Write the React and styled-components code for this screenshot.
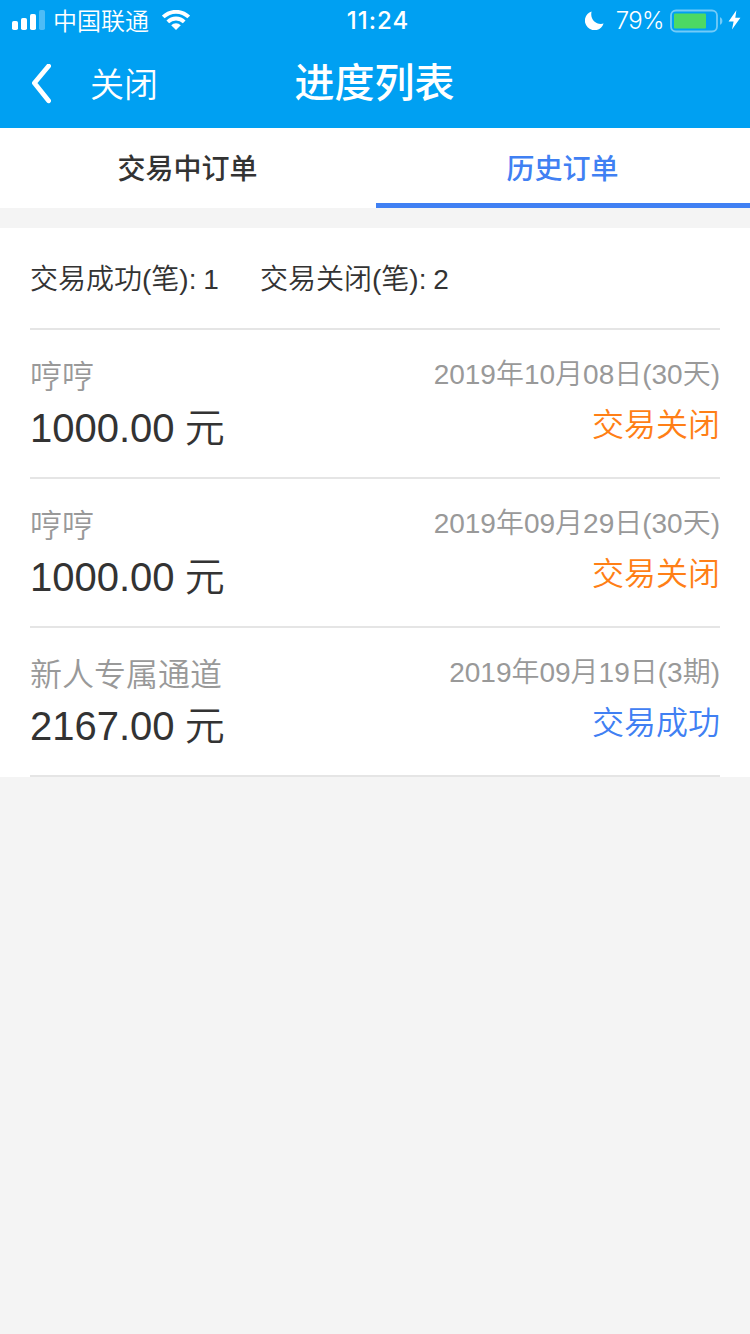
import React from 'react';
import styled, { createGlobalStyle, ThemeProvider } from 'styled-components';

const theme = {
  color: {
    header: '#00a0f2',
    primary: '#4080f3',
    warning: '#ff7f16',
    text: '#333333',
    muted: '#999999',
    line: '#e5e5e5',
    page: '#f4f4f4',
    battery: '#4cd964',
  },
  fontSize: {
    s: '28px',
    m: '32px',
    l: '40px',
  },
};

const GlobalStyle = createGlobalStyle`
  *,
  *::before,
  *::after {
    box-sizing: border-box;
  }

  body {
    margin: 0;
    font-family: 'Liberation Sans', 'Noto Sans CJK SC', sans-serif;
    color: ${theme.color.text};
    background: ${theme.color.page};
  }
`;

const StyledPage = styled.div`
  min-height: 100vh;
  background: ${({ theme }) => theme.color.page};
`;

const StyledHeader = styled.header`
  height: 128px;
  color: #fff;
  background: ${({ theme }) => theme.color.header};
`;

const StyledStatusBar = styled.div`
  display: grid;
  grid-template-columns: 1fr auto 1fr;
  align-items: center;
  height: 40px;
  padding: 0 9px 0 12px;
  font-family: Inter, 'Noto Sans CJK SC', sans-serif;
  font-size: 24px;
  line-height: 38px;
`;

const StyledStatusGroup = styled.div`
  display: flex;
  align-items: center;
  height: 40px;
  justify-content: ${({ align }) => align || 'flex-start'};
`;

const StyledCarrier = styled.span`
  margin: -1px 13px 0 8px;
  font-family: 'Noto Sans CJK SC', sans-serif;
  font-weight: 350;
`;

const StyledTime = styled.span`
  padding: 2px 0 0 3px;
  font-size: 24px;
  font-weight: 500;
  letter-spacing: 1px;
`;

const StyledBatteryLevel = styled.span`
  margin: 2px 6px 0 12px;
  font-size: 24px;
  font-weight: 350;
  letter-spacing: -0.6px;
`;

const StyledBattery = styled.span`
  display: flex;
  margin: 1px 5px 0 0;
`;

const StyledNav = styled.nav`
  display: grid;
  grid-template-columns: 1fr auto 1fr;
  align-items: center;
  height: 88px;
  padding: 0 32px 0 31px;
`;

const StyledNavActions = styled.div`
  display: flex;
  align-items: center;
  gap: 39px;
`;

const StyledClose = styled.span`
  padding-top: 1px;
  font-size: 34px;
  font-weight: 350;
  line-height: 48px;
`;

const StyledTitle = styled.h1`
  margin: 0;
  padding-bottom: 2px;
  font-size: ${({ theme }) => theme.fontSize.l};
  font-weight: 500;
  line-height: 56px;
`;

const StyledTabs = styled.div`
  display: grid;
  grid-template-columns: 376px 1fr;
  height: 80px;
  margin-bottom: 20px;
  background: #fff;
`;

const StyledTab = styled.div`
  display: flex;
  align-items: center;
  justify-content: center;
  padding: 3px 1px 0 0;
  font-size: ${({ theme }) => theme.fontSize.s};
  font-weight: 500;
  color: ${({ theme, isActive }) => (isActive ? theme.color.primary : theme.color.text)};
  border-bottom: 5px solid ${({ theme, isActive }) => (isActive ? theme.color.primary : '#fff')};
`;

const StyledPanel = styled.section`
  padding: 0 30px;
  background: #fff;
`;

const StyledSummary = styled.div`
  display: flex;
  gap: 42px;
  height: 102px;
  padding-top: 1px;
  border-bottom: 2px solid ${({ theme }) => theme.color.line};
  font-size: ${({ theme }) => theme.fontSize.s};
  font-weight: 350;
  line-height: 102px;
  word-spacing: -1px;
`;

const StyledSummaryItem = styled.span`
  width: 188px;
  white-space: nowrap;
`;

const StyledOrder = styled.div`
  display: flex;
  justify-content: space-between;
  height: 149px;
  padding-top: 24px;
  border-bottom: 2px solid ${({ theme }) => theme.color.line};
`;

const StyledColumn = styled.div`
  display: flex;
  flex-direction: column;
  align-items: ${({ align }) => align || 'flex-start'};
`;

const StyledName = styled.div`
  font-size: ${({ theme }) => theme.fontSize.m};
  font-weight: 350;
  line-height: 46px;
  color: ${({ theme }) => theme.color.muted};
`;

const StyledAmount = styled.div`
  font-size: ${({ theme }) => theme.fontSize.l};
  font-weight: 350;
  line-height: 56px;
  word-spacing: -1px;
`;

const StyledDate = styled.div`
  font-size: ${({ theme }) => theme.fontSize.s};
  font-weight: 350;
  line-height: 42px;
  color: ${({ theme }) => theme.color.muted};
`;

const StyledState = styled.div`
  font-size: ${({ theme }) => theme.fontSize.m};
  font-weight: 350;
  line-height: 59px;
  color: ${({ theme, isSuccess }) => (isSuccess ? theme.color.primary : theme.color.warning)};
`;

const SignalIcon = () => (
  <svg width="33" height="20" viewBox="0 0 33 20" fill="#fff">
    <rect x="0" y="11" width="6" height="9" rx="1.8" />
    <rect x="9" y="8" width="6" height="12" rx="1.8" />
    <rect x="18" y="4" width="6" height="16" rx="1.8" />
    <rect x="27" y="0" width="6" height="20" rx="1.8" opacity="0.3" />
  </svg>
);

const WifiIcon = () => (
  <svg width="28" height="20" viewBox="0 0 28 20" fill="none" stroke="#fff" strokeWidth="3.8">
    <path d="M1.3 7a18 18 0 0 1 25.4 0" />
    <path d="M5.8 11.9a11.6 11.6 0 0 1 16.4 0" />
    <path d="M9.2 15.2a6.8 6.8 0 0 1 9.6 0L14 20z" fill="#fff" stroke="none" />
  </svg>
);

const MoonIcon = () => (
  <svg width="19" height="19" viewBox="0 0 19 19" fill="#fff">
    <path d="M6.6 0.4C4.6 7.8 11 14.6 18.6 12.6A9.6 9.6 0 1 1 6.6 0.4z" />
  </svg>
);

const BatteryIcon = () => (
  <svg width="53" height="24" viewBox="0 0 53 24">
    <rect x="1" y="1.5" width="46" height="21" rx="5" fill="none" stroke="#fff" strokeWidth="1.8" opacity="0.45" />
    <path d="M50 8.2c3.2 1.2 3.2 6.4 0 7.6z" fill="#fff" opacity="0.45" />
    <rect x="4" y="4.5" width="32" height="15" rx="1" fill={theme.color.battery} />
  </svg>
);

const BoltIcon = () => (
  <svg width="13" height="20" viewBox="0 0 13 20" fill="#fff">
    <path d="M8.4 0.3L0.6 11.6h5L4 19.6 12.4 7.8H7.3z" />
  </svg>
);

const BackIcon = () => (
  <svg width="20" height="40" viewBox="0 0 20 40" fill="none" stroke="#fff" strokeWidth="4.8" strokeLinecap="round" strokeLinejoin="round">
    <path d="M17.6 2L3.4 19l14.2 17.8" />
  </svg>
);

const StatusBar = () => (
  <StyledStatusBar>
    <StyledStatusGroup>
      <SignalIcon />
      <StyledCarrier>中国联通</StyledCarrier>
      <WifiIcon />
    </StyledStatusGroup>
    <StyledTime>11:24</StyledTime>
    <StyledStatusGroup align="flex-end">
      <MoonIcon />
      <StyledBatteryLevel>79%</StyledBatteryLevel>
      <StyledBattery>
        <BatteryIcon />
      </StyledBattery>
      <BoltIcon />
    </StyledStatusGroup>
  </StyledStatusBar>
);

const Order = ({ name, amount, date, state, isSuccess }) => (
  <StyledOrder>
    <StyledColumn>
      <StyledName>{name}</StyledName>
      <StyledAmount>{`${amount} 元`}</StyledAmount>
    </StyledColumn>
    <StyledColumn align="flex-end">
      <StyledDate>{date}</StyledDate>
      <StyledState isSuccess={isSuccess}>{state}</StyledState>
    </StyledColumn>
  </StyledOrder>
);

const orders = [
  { id: 1, name: '哼哼', amount: '1000.00', date: '2019年10月08日(30天)', state: '交易关闭', isSuccess: false },
  { id: 2, name: '哼哼', amount: '1000.00', date: '2019年09月29日(30天)', state: '交易关闭', isSuccess: false },
  { id: 3, name: '新人专属通道', amount: '2167.00', date: '2019年09月19日(3期)', state: '交易成功', isSuccess: true },
];

const App = () => (
  <ThemeProvider theme={theme}>
    <GlobalStyle />
    <StyledPage>
      <StyledHeader>
        <StatusBar />
        <StyledNav>
          <StyledNavActions>
            <BackIcon />
            <StyledClose>关闭</StyledClose>
          </StyledNavActions>
          <StyledTitle>进度列表</StyledTitle>
        </StyledNav>
      </StyledHeader>
      <StyledTabs>
        <StyledTab>交易中订单</StyledTab>
        <StyledTab isActive>历史订单</StyledTab>
      </StyledTabs>
      <StyledPanel>
        <StyledSummary>
          <StyledSummaryItem>交易成功(笔): 1</StyledSummaryItem>
          <StyledSummaryItem>交易关闭(笔): 2</StyledSummaryItem>
        </StyledSummary>
        {orders.map((order) => (
          <Order key={order.id} {...order} />
        ))}
      </StyledPanel>
    </StyledPage>
  </ThemeProvider>
);

export default App;
